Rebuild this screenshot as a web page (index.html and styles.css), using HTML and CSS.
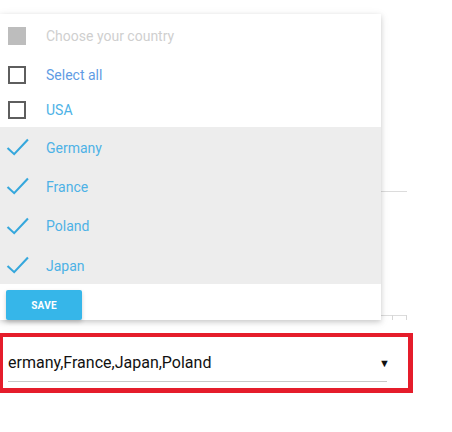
FILE: index.html
```html
<!DOCTYPE html>
<html>
<head>
<meta charset="utf-8">
<link rel="stylesheet" href="styles.css">
</head>
<body>
<div class="stage">
  <div class="chart">
    <div class="grid-line g1"></div>
    <div class="grid-line g2"><span class="tick t1"></span><span class="tick t2"></span></div>
  </div>
  <div class="dropdown">
    <ul class="options">
      <li class="opt r1 disabled"><span class="box filled"></span><span class="label">Choose your country</span></li>
      <li class="opt r2"><span class="box"></span><span class="label all">Select all</span></li>
      <li class="opt r3"><span class="box"></span><span class="label">USA</span></li>
      <li class="opt sel"><svg class="check" viewBox="0 0 24 20"><path d="M1.5 10.5 L8.5 17 L23 1.5"/></svg><span class="label">Germany</span></li>
      <li class="opt sel"><svg class="check" viewBox="0 0 24 20"><path d="M1.5 10.5 L8.5 17 L23 1.5"/></svg><span class="label">France</span></li>
      <li class="opt sel last-sel"><svg class="check" viewBox="0 0 24 20"><path d="M1.5 10.5 L8.5 17 L23 1.5"/></svg><span class="label">Poland</span></li>
      <li class="opt sel"><svg class="check" viewBox="0 0 24 20"><path d="M1.5 10.5 L8.5 17 L23 1.5"/></svg><span class="label">Japan</span></li>
    </ul>
    <div class="actions"><button class="save">SAVE</button></div>
  </div>
  <div class="select-wrap">
    <div class="select">
      <span class="value">ermany,France,Japan,Poland</span>
      <span class="caret">▼</span>
    </div>
  </div>
</div>
</body>
</html>
```
FILE: styles.css
```css
html, body {
  margin: 0;
  padding: 0;
  background: #fff;
  font-family: Roboto, "Liberation Sans", sans-serif;
}
.stage {
  position: relative;
  width: 452px;
  height: 432px;
  overflow: hidden;
  padding-top: 14px;
  box-sizing: border-box;
}
.chart {
  position: absolute;
  left: 370px;
  top: 0;
  width: 40px;
  height: 330px;
}
.grid-line {
  position: absolute;
  left: 0;
  width: 37px;
  height: 1px;
  background: #dcdcdc;
}
.g1 { top: 191px; }
.g2 { top: 315px; }
.tick {
  position: absolute;
  top: 0;
  width: 1px;
  height: 5px;
  background: #d6d6d6;
}
.t1 { left: 22px; }
.t2 { left: 36px; }
.dropdown {
  position: relative;
  z-index: 2;
  width: 381px;
  height: 306px;
  background: #fff;
  box-shadow: 0 2px 5px rgba(0,0,0,0.16), 0 2px 10px rgba(0,0,0,0.08);
}
.options {
  list-style: none;
  margin: 0;
  padding: 0;
}
.opt {
  display: flex;
  align-items: center;
  height: 39px;
  font-size: 14px;
  color: #4db2e6;
}
.r1 { height: 42px; padding-top: 2px; box-sizing: border-box; }
.r2 { height: 36px; padding-top: 1px; box-sizing: border-box; }
.r3 { height: 35px; padding-top: 1px; box-sizing: border-box; }
.sel { background: #ededed; padding-top: 2px; box-sizing: border-box; }
.last-sel { height: 40px; }
.box {
  width: 18px;
  height: 18px;
  margin-left: 8px;
  box-sizing: border-box;
  border: 2px solid #5e5e5e;
  flex: none;
}
.box.filled {
  background: #bdbdbd;
  border-color: #bdbdbd;
}
.label {
  margin-left: 20px;
}
.disabled .label {
  color: #cfcfcf;
}
.label.all {
  color: #5f9ce4;
}
.check {
  width: 23px;
  height: 19px;
  margin-left: 6px;
  flex: none;
  fill: none;
  stroke: #35a7dc;
  stroke-width: 2.2;
}
.sel .label {
  margin-left: 17px;
}
.actions {
  padding: 6px 0 0 6px;
}
.save {
  width: 76px;
  height: 30px;
  border: none;
  border-radius: 2px;
  background: #36b6e9;
  color: #fff;
  font-family: Roboto, "Liberation Sans", sans-serif;
  font-size: 10px;
  font-weight: 700;
  letter-spacing: 0.2px;
  padding: 0;
  box-shadow: 0 2px 4px rgba(0,0,0,0.18);
}
.select-wrap {
  margin-top: 13px;
  width: 413px;
  height: 60px;
  box-sizing: border-box;
  border-style: solid;
  border-color: #e51d2b;
  border-width: 4px 5px 5px 3px;
  padding: 0 21px 0 5px;
}
.select {
  display: flex;
  align-items: center;
  justify-content: space-between;
  height: 45px;
  padding-top: 6px;
  box-sizing: border-box;
  border-bottom: 1px solid #c8c8c8;
  font-size: 16px;
  color: #111;
}
.caret {
  font-size: 11px;
  margin-right: -3px;
  padding-top: 2px;
  color: #111;
}
```
